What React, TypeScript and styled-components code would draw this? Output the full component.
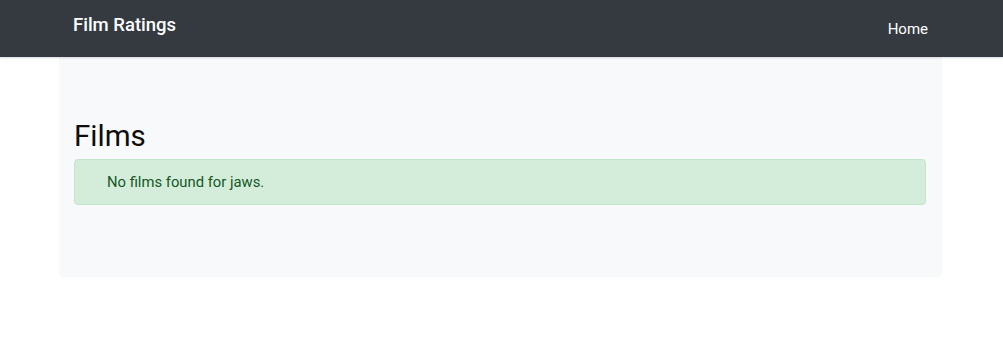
import React from "react";
import styled, { createGlobalStyle } from "styled-components";

const GlobalStyle = createGlobalStyle`
  html, body {
    margin: 0;
    padding: 0;
    background: #fff;
    font-family: Roboto, "Liberation Sans", Arial, sans-serif;
    color: #212529;
  }
  * {
    box-sizing: border-box;
  }
`;

const NavBar = styled.nav`
  height: 57px;
  background: #343a40;
  display: flex;
  justify-content: center;
  box-shadow: 0 1px 2px rgba(0, 0, 0, 0.15);
  position: relative;
`;

const NavInner = styled.div`
  width: 883px;
  padding: 0 14px 0 14px;
  display: flex;
  align-items: center;
  justify-content: space-between;
  margin-left: -2px;
`;

const Brand = styled.a`
  color: #fff;
  font-size: 18.5px;
  font-weight: 500;
  text-decoration: none;
  margin-top: -7px;
`;

const NavLink = styled.a`
  color: #fff;
  font-size: 15px;
  text-decoration: none;
  margin-top: 1px;
`;

const Main = styled.main`
  display: flex;
  justify-content: center;
`;

const Card = styled.section`
  width: 883px;
  height: 220px;
  background: #f8f9fa;
  padding: 60px 16px 0 15px;
  margin-left: -2px;
  border-radius: 0 0 4px 4px;
`;

const Title = styled.h2`
  margin: 0 0 4px;
  font-size: 29.5px;
  font-weight: 400;
  line-height: 38px;
  color: #0d0d0d;
`;

const Alert = styled.div`
  background: #d4edda;
  border: 1px solid #c3e6cb;
  border-radius: 4px;
  color: #155724;
  height: 46px;
  padding: 0 0 0 32px;
  display: flex;
  align-items: center;
  font-size: 14.8px;
`;

export default function App() {
  return (
    <>
      <GlobalStyle />
      <NavBar>
        <NavInner>
          <Brand href="#">Film Ratings</Brand>
          <NavLink href="#">Home</NavLink>
        </NavInner>
      </NavBar>
      <Main>
        <Card>
          <Title>Films</Title>
          <Alert>No films found for jaws.</Alert>
        </Card>
      </Main>
    </>
  );
}
